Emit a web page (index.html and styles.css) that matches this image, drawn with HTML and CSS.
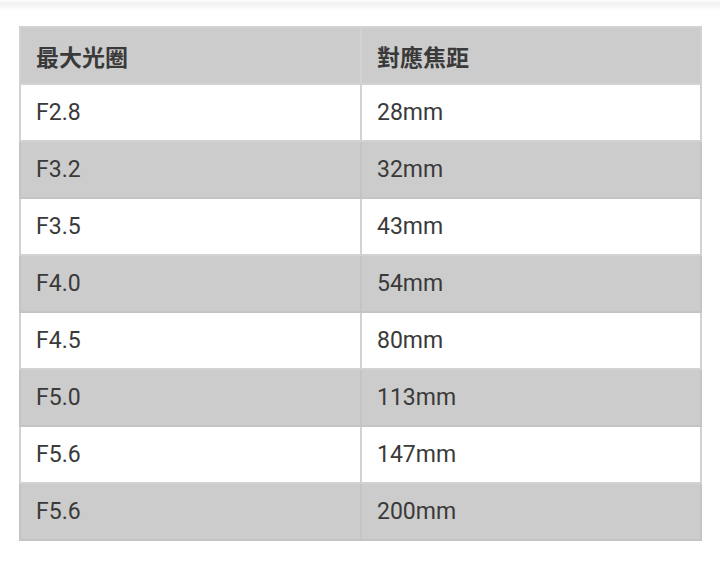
FILE: index.html
```html
<!DOCTYPE html>
<html lang="zh-Hant">
<head>
<meta charset="utf-8">
<link rel="stylesheet" href="styles.css">
</head>
<body>
<div class="topshade"></div>
<div class="wrap">
<table class="spec">
<thead>
<tr><th>最大光圈</th><th>對應焦距</th></tr>
</thead>
<tbody>
<tr><td>F2.8</td><td>28mm</td></tr>
<tr class="alt"><td>F3.2</td><td>32mm</td></tr>
<tr><td>F3.5</td><td>43mm</td></tr>
<tr class="alt"><td>F4.0</td><td>54mm</td></tr>
<tr><td>F4.5</td><td>80mm</td></tr>
<tr class="alt"><td>F5.0</td><td>113mm</td></tr>
<tr><td>F5.6</td><td>147mm</td></tr>
<tr class="alt"><td>F5.6</td><td>200mm</td></tr>
</tbody>
</table>
</div>
</body>
</html>
```
FILE: styles.css
```css
html, body {
  margin: 0;
  padding: 0;
  background: #ffffff;
}
body {
  width: 720px;
  height: 573px;
  overflow: hidden;
  font-family: Roboto, "Noto Sans CJK TC", sans-serif;
  color: #3a3a3a;
}
.topshade {
  height: 10px;
  background: linear-gradient(to bottom, #ffffff 0%, #f1f1f1 30%, #f6f6f6 60%, #ffffff 100%);
}
.wrap {
  padding: 16px 18px 0 19px;
}
.spec {
  width: 683px;
  border-collapse: collapse;
  table-layout: fixed;
}
.spec th, .spec td {
  border: 2px solid #d2d2d2;
  height: 55px;
  padding: 0 0 0 15px;
  text-align: left;
  font-size: 23px;
  line-height: 28px;
  vertical-align: middle;
}
.spec th {
  background: #cccccc;
  font-weight: bold;
  color: #3a3a3a;
  font-family: "Noto Sans CJK TC", sans-serif;
}
.spec td {
  background: #ffffff;
}
.spec tr.alt td {
  background: #cccccc;
  border-color: #c4c4c4;
}
.spec th:first-child, .spec td:first-child {
  width: 324px;
}
```
